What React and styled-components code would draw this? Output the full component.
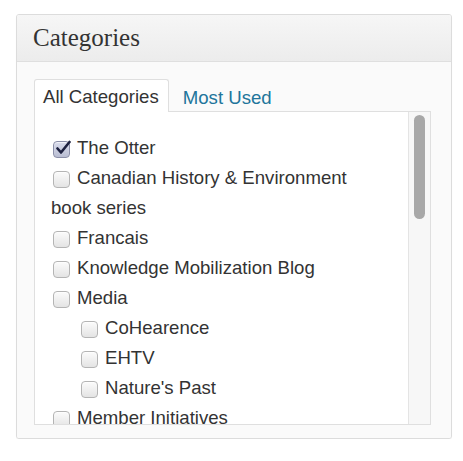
import React from "react";
import styled, { createGlobalStyle } from "styled-components";

const Global = createGlobalStyle`
  html, body { margin: 0; padding: 0; background: #ffffff; }
  body { font-family: "Liberation Sans", Arial, sans-serif; }
`;

const Page = styled.div`
  padding: 14px 0 0 16px;
`;

const Panel = styled.div`
  width: 436px;
  height: 425px;
  box-sizing: border-box;
  border: 1px solid #dcdcdc;
  border-radius: 3px;
  background: #f9f9f9;
  box-shadow: 0 1px 1px rgba(0, 0, 0, 0.04);
  display: flex;
  flex-direction: column;
  overflow: hidden;
`;

const Header = styled.div`
  flex: 0 0 auto;
  height: 47px;
  box-sizing: border-box;
  border-bottom: 1px solid #dfdfdf;
  background: linear-gradient(#f6f6f6, #ececec);
  display: flex;
  align-items: center;
  padding: 0 0 1px 16px;
  font-family: "Liberation Serif", "Times New Roman", serif;
  font-size: 25px;
  color: #333333;
`;

const Body = styled.div`
  flex: 1;
  min-height: 0;
  padding: 18px 20px 13px 17px;
  display: flex;
  flex-direction: column;
  background: #fafafa;
`;

const Tabs = styled.div`
  flex: 0 0 auto;
  display: flex;
  align-items: flex-end;
  height: 32px;
  margin-bottom: -1px;
  position: relative;
  z-index: 1;
`;

const Tab = styled.div`
  box-sizing: border-box;
  height: ${(p) => (p.$active ? "33px" : "32px")};
  padding: 5px 9px 0 8px;
  margin-right: 5px;
  font-size: 18.6px;
  line-height: 24px;
  color: ${(p) => (p.$active ? "#333333" : "#21759b")};
  background: ${(p) => (p.$active ? "#ffffff" : "transparent")};
  border: 1px solid ${(p) => (p.$active ? "#dfdfdf" : "transparent")};
  border-bottom: none;
  border-radius: 3px 3px 0 0;
`;

const Box = styled.div`
  flex: 1;
  min-height: 0;
  display: flex;
  border: 1px solid #dfdfdf;
  background: #ffffff;
  overflow: hidden;
`;

const List = styled.ul`
  flex: 1;
  list-style: none;
  margin: 0;
  padding: 21px 18px 0 16px;
  overflow: hidden;
`;

const Item = styled.li`
  margin: 0;
  padding: 0;
`;

const Children = styled.ul`
  list-style: none;
  margin: 0;
  padding: 0 0 0 28px;
`;

const Label = styled.label`
  display: block;
  font-size: 18.6px;
  line-height: 30px;
  color: #333333;
`;

const Check = styled.span`
  display: inline-block;
  box-sizing: border-box;
  width: 17px;
  height: 17px;
  margin: 0 7px 0 2px;
  vertical-align: -4px;
  border-radius: 4px;
  border: 1px solid ${(p) => (p.$checked ? "#8a8ea8" : "#b4b4b4")};
  background: ${(p) =>
    p.$checked
      ? "linear-gradient(#d9dcec, #b9bdd2)"
      : "linear-gradient(#fbfbfb, #e4e4e4)"};
  box-shadow: inset 0 1px 1px rgba(255, 255, 255, 0.7);
  position: relative;
  svg {
    position: absolute;
    left: 1px;
    top: -2px;
  }
`;

const Track = styled.div`
  width: 22px;
  border-left: 1px solid #e4e4e4;
  background: #f7f7f7;
  padding: 3px 0 0 5px;
  box-sizing: border-box;
`;

const Thumb = styled.div`
  width: 11px;
  height: 104px;
  border-radius: 6px;
  background: #a8a8a8;
`;

const Checkbox = ({ checked }) => (
  <Check $checked={checked}>
    {checked && (
      <svg width="16" height="16" viewBox="0 0 16 16">
        <path
          d="M2.5 8.5 L6 12.5 L14.5 2"
          fill="none"
          stroke="#1d2140"
          strokeWidth="2.6"
          strokeLinecap="round"
          strokeLinejoin="round"
        />
      </svg>
    )}
  </Check>
);

const categories = [
  { name: "The Otter", checked: true },
  { name: "Canadian History & Environment book series" },
  { name: "Francais" },
  { name: "Knowledge Mobilization Blog" },
  {
    name: "Media",
    children: [{ name: "CoHearence" }, { name: "EHTV" }, { name: "Nature's Past" }],
  },
  { name: "Member Initiatives" },
];

const Entry = ({ cat }) => (
  <Item>
    <Label>
      <Checkbox checked={cat.checked} />
      {cat.name}
    </Label>
    {cat.children && (
      <Children>
        {cat.children.map((c) => (
          <Entry key={c.name} cat={c} />
        ))}
      </Children>
    )}
  </Item>
);

export default function App() {
  return (
    <Page>
      <Global />
      <Panel>
        <Header>Categories</Header>
        <Body>
          <Tabs>
            <Tab $active>All Categories</Tab>
            <Tab>Most Used</Tab>
          </Tabs>
          <Box>
            <List>
              {categories.map((c) => (
                <Entry key={c.name} cat={c} />
              ))}
            </List>
            <Track>
              <Thumb />
            </Track>
          </Box>
        </Body>
      </Panel>
    </Page>
  );
}
